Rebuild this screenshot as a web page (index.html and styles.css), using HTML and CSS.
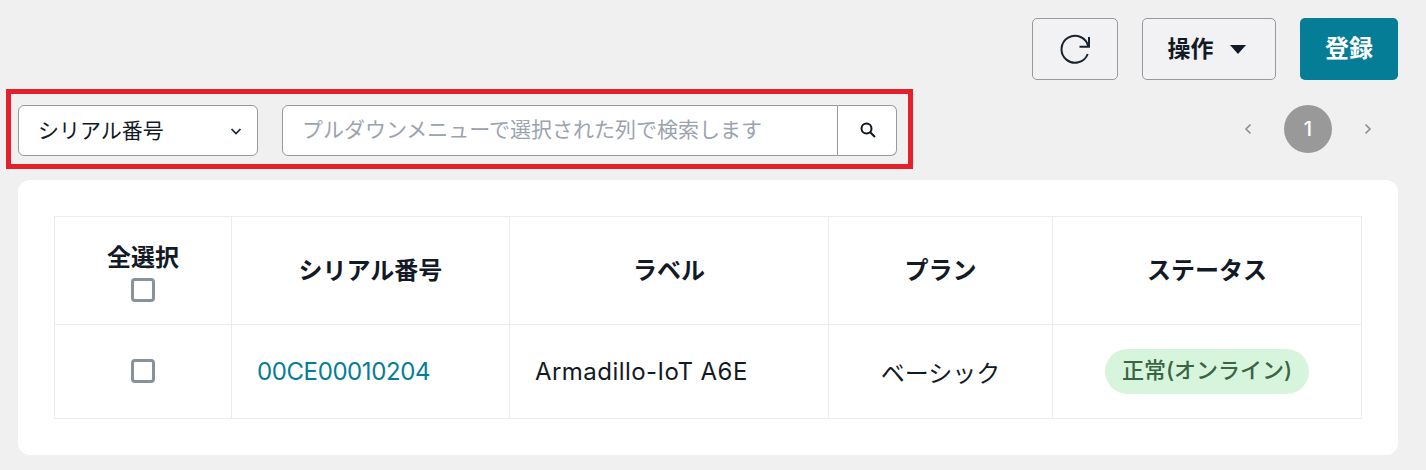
FILE: index.html
```html
<!DOCTYPE html>
<html lang="ja">
<head>
    <meta charset="UTF-8">
    <title>デバイス一覧</title>
    <link rel="stylesheet" href="styles.css">
</head>
<body>
<div class="page">
    <div class="actions">
        <button class="btn btn-reload">
            <svg width="32" height="32" viewBox="0 0 32 32" fill="none" stroke="#1a2330" stroke-width="2">
                <path d="M28.7 21A13.5 13.5 0 1 1 29.3 13.7"/>
                <path d="M30 4V13.7H20.5"/>
            </svg>
        </button>
        <button class="btn btn-menu">操作<span class="caret"></span></button>
        <button class="btn btn-primary">登録</button>
    </div>

    <div class="filter-row">
        <div class="filter-frame">
            <div class="select">
                <span>シリアル番号</span>
                <svg width="14" height="14" viewBox="0 0 14 14" fill="none" stroke="#1a2330" stroke-width="1.7">
                    <path d="M2.5 5L7 9.5L11.5 5"/>
                </svg>
            </div>
            <div class="search">
                <div class="search-input">プルダウンメニューで選択された列で検索します</div>
                <button class="search-button">
                    <svg width="18" height="18" viewBox="0 0 18 18" fill="none" stroke="#10161f" stroke-width="2">
                        <circle cx="7.5" cy="7.5" r="5"/>
                        <path d="M11.2 11.2L16 16"/>
                    </svg>
                </button>
            </div>
        </div>
        <div class="pager">
            <svg width="10" height="14" viewBox="0 0 10 14" fill="none" stroke="#8a8f94" stroke-width="1.6">
                <path d="M7.5 2.5L3 7L7.5 11.5"/>
            </svg>
            <span class="page-current">1</span>
            <svg width="10" height="14" viewBox="0 0 10 14" fill="none" stroke="#8a8f94" stroke-width="1.6">
                <path d="M2.5 2.5L7 7L2.5 11.5"/>
            </svg>
        </div>
    </div>

    <div class="card">
        <table class="device-table">
            <thead>
            <tr>
                <th class="col-check">
                    全選択
                    <span class="checkbox"></span>
                </th>
                <th class="col-serial">シリアル番号</th>
                <th class="col-label">ラベル</th>
                <th class="col-plan">プラン</th>
                <th class="col-status">ステータス</th>
            </tr>
            </thead>
            <tbody>
            <tr>
                <td class="cell-center"><span class="checkbox"></span></td>
                <td><a class="serial-link" href="#">00CE00010204</a></td>
                <td class="cell-label">Armadillo-IoT A6E</td>
                <td class="cell-center">ベーシック</td>
                <td class="cell-center"><span class="status">正常(オンライン)</span></td>
            </tr>
            </tbody>
        </table>
    </div>
</div>
</body>
</html>
```

FILE: styles.css
```css
html, body {
    margin: 0;
    height: 100%;
}

body {
    background-color: #f0f0f0;
    color: #121a26;
    font-family: "Inter", "Noto Sans CJK JP", sans-serif;
    overflow: hidden;
}

.page {
    padding: 18px 28px 0 18px;
    width: 1426px;
    box-sizing: border-box;
}

/*上部ボタン*/
.actions {
    display: flex;
    justify-content: flex-end;
    gap: 24px;
    height: 62px;
}

.btn {
    height: 62px;
    border: 1px solid #999;
    border-radius: 5px;
    background-color: #f2f2f4;
    color: #121a26;
    padding: 0;
    font-family: inherit;
    font-size: 23px;
    font-weight: 700;
    display: flex;
    align-items: center;
    justify-content: center;
}

.btn-reload {
    width: 86px;
}

.btn-menu {
    width: 134px;
    gap: 16px;
    padding: 0 5px 5px 0;
}

.caret {
    width: 0;
    height: 0;
    margin-top: 5px;
    border-left: 8px solid transparent;
    border-right: 8px solid transparent;
    border-top: 9px solid #121a26;
}

.btn-primary {
    width: 98px;
    border: 0;
    padding-bottom: 5px;
    background-color: #067d96;
    color: white;
    font-size: 24px;
}

/*検索*/
.filter-row {
    display: flex;
    justify-content: space-between;
    align-items: center;
    margin: 9px 0 11px -12px;
}

.filter-frame {
    display: flex;
    gap: 24px;
    border: 5px solid #e3202c;
    padding: 11px 11px 8px 7px;
    width: 907px;
    height: 80px;
    box-sizing: border-box;
}

.select {
    width: 240px;
    height: 51px;
    box-sizing: border-box;
    border: 1px solid #999;
    border-radius: 6px;
    background-color: white;
    padding: 0 14px 0 19px;
    font-size: 21px;
    display: flex;
    align-items: center;
    justify-content: space-between;
}

.select span {
    margin-bottom: 3px;
}

.search {
    display: flex;
    flex: 1;
    height: 51px;
}

.search-input {
    flex: 1;
    box-sizing: border-box;
    border: 1px solid #999;
    border-radius: 6px 0 0 6px;
    background-color: white;
    padding-left: 19px;
    font-size: 21px;
    line-height: 47px;
    color: #9ca3af;
}

.search-button {
    width: 59px;
    border: 1px solid #999;
    border-left: 0;
    border-radius: 0 6px 6px 0;
    background-color: white;
    padding: 0 0 2px 1px;
    display: flex;
    align-items: center;
    justify-content: center;
}

/*ページャー*/
.pager {
    display: flex;
    align-items: center;
    gap: 31px;
    margin-right: 25px;
}

.page-current {
    width: 48px;
    height: 48px;
    border-radius: 50%;
    background-color: #999;
    color: white;
    font-size: 20px;
    font-weight: 500;
    line-height: 48px;
    text-align: center;
}

/*テーブル*/
.card {
    width: 1380px;
    height: 275px;
    box-sizing: border-box;
    padding: 36px;
    background-color: white;
    border-radius: 12px;
}

.device-table {
    width: 1308px;
    table-layout: fixed;
    border-collapse: collapse;
}

.device-table th,
.device-table td {
    border: 1px solid #eaecef;
    padding: 0;
    font-size: 24px;
}

.device-table th {
    height: 108px;
    box-sizing: border-box;
    padding-top: 1px;
    line-height: 30px;
    font-weight: 700;
    text-align: center;
}

.device-table td {
    height: 94px;
    box-sizing: border-box;
    padding: 0 0 1px 25px;
}

.device-table td.cell-center {
    padding-left: 0;
    text-align: center;
}

.device-table th.col-check {
    width: 177px;
    padding: 4px 0 0;
}

.device-table th.col-serial {
    width: 278px;
}

.device-table th.col-label {
    width: 319px;
}

.device-table th.col-plan {
    width: 224px;
}

.checkbox {
    display: block;
    width: 24px;
    height: 24px;
    box-sizing: border-box;
    margin: 0 auto;
    border: 3px solid #87929b;
    border-radius: 4px;
}

.col-check .checkbox {
    margin-top: 5px;
}

.serial-link {
    color: #067d96;
    text-decoration: none;
    letter-spacing: -.4px;
}

.cell-label {
    letter-spacing: .45px;
}

.status {
    display: inline-block;
    height: 45px;
    padding: 0 17px;
    border-radius: 23px;
    background-color: #d7f5dc;
    color: #3b6445;
    font-size: 22px;
    font-weight: 500;
    line-height: 42px;
}
```
